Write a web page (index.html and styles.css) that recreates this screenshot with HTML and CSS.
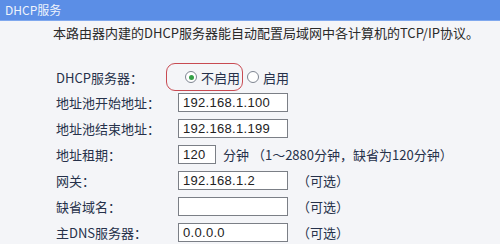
FILE: index.html
```html
<!DOCTYPE html>
<html lang="zh-CN">
<head>
  <meta charset="UTF-8" />
  <title>DHCP服务</title>
  <link rel="stylesheet" href="styles.css">
</head>
<body>
  <div class="title-bar">DHCP服务</div>
  <p class="intro">本路由器内建的DHCP服务器能自动配置局域网中各计算机的TCP/IP协议。</p>

  <div class="form">
    <div class="label">DHCP服务器：</div>
    <div class="field">
      <span class="mark">
        <span class="radio checked"></span>不启用
      </span>
      <span class="radio"></span>启用
    </div>

    <div class="label">地址池开始地址：</div>
    <div class="field"><span class="input">192.168.1.100</span></div>

    <div class="label">地址池结束地址：</div>
    <div class="field"><span class="input">192.168.1.199</span></div>

    <div class="label">地址租期：</div>
    <div class="field"><span class="input short">120</span><span class="note">分钟 （1～2880分钟，缺省为120分钟）</span></div>

    <div class="label">网关：</div>
    <div class="field"><span class="input">192.168.1.2</span><span class="note opt">（可选）</span></div>

    <div class="label">缺省域名：</div>
    <div class="field"><span class="input"></span><span class="note opt">（可选）</span></div>

    <div class="label">主DNS服务器：</div>
    <div class="field"><span class="input">0.0.0.0</span><span class="note opt">（可选）</span></div>
  </div>
</body>
</html>
```

FILE: styles.css
```css
body {
  margin: 0;
  background: #f4f5f8;
  font-family: "Noto Sans CJK SC", sans-serif;
  font-size: 13px;
  color: #2b2f3a;
  overflow: hidden;
}
.title-bar {
  height: 20px;
  line-height: 20px;
  padding-left: 5px;
  background: #5b8ee6;
  border-bottom: 1px solid #7fa8ee;
  color: #eef3fc;
  font-size: 12px;
}
.intro {
  margin: 2px 0 0 53px;
  line-height: 20px;
  color: #2a2a2a;
}
.form {
  display: grid;
  grid-template-columns: 122px 1fr;
  grid-auto-rows: 26px;
  margin: 20px 0 0 56px;
  color: #26314a;
}
.form > :first-child,
.form > :nth-child(2) {
  height: 28px;
}
.label,
.field {
  display: flex;
  align-items: center;
}
.mark {
  display: inline-flex;
  align-items: center;
  height: 26px;
  margin-left: -12px;
  margin-right: 4px;
  padding: 0 2px 0 18px;
  border: 1px solid #c84a52;
  border-radius: 9px;
}
.radio {
  display: inline-block;
  width: 10px;
  height: 10px;
  margin-right: 4px;
  border: 1px solid #7e8591;
  border-radius: 50%;
  background: #fff;
  position: relative;
}
.radio.checked::after {
  content: "";
  position: absolute;
  left: 2.5px;
  top: 2.5px;
  width: 5px;
  height: 5px;
  border-radius: 50%;
  background: #34a046;
}
.input {
  box-sizing: border-box;
  width: 110px;
  height: 19px;
  line-height: 17px;
  padding-left: 4px;
  border: 1px solid #7b7f86;
  background: #fff;
  font-family: "Liberation Sans", sans-serif;
  color: #222;
  letter-spacing: 0.3px;
}
.input.short {
  width: 38px;
}
.note {
  margin-left: 7px;
}
.note.opt {
  margin-left: 9px;
}
```
